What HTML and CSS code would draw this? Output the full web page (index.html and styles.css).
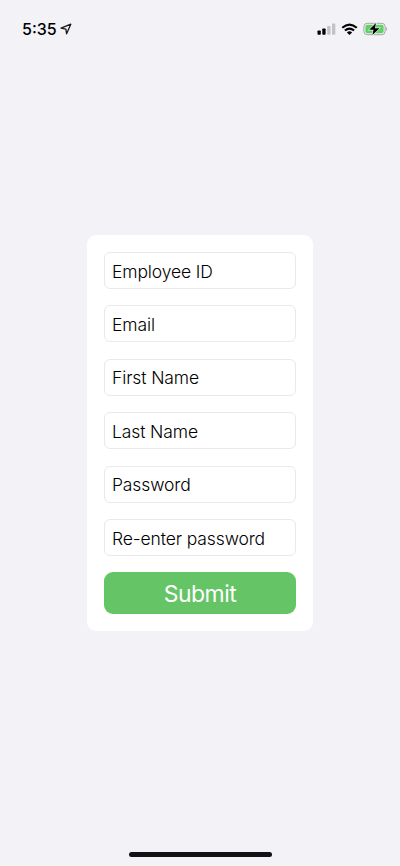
FILE: index.html
```html
<!DOCTYPE html>
<html lang="en">
<head>
<meta charset="utf-8">
<title>Register</title>
<link rel="stylesheet" href="styles.css">
</head>
<body>
<header class="status">
  <div class="clock"><span class="time">5:35</span>
    <svg class="arrow" width="12" height="12" viewBox="0 0 12 12"><path d="M1 5.200 10.800 1.200 6.600 10.800 5.900 6.100Z" fill="none" stroke="#1b1b1d" stroke-width="1.3" stroke-linejoin="round"/></svg>
  </div>
  <div class="indicators">
    <svg width="19" height="12" viewBox="0 0 19 12"><rect x=".5" y="7.500" width="3.300" height="4.200" rx=".8"/><rect x="5.300" y="5.500" width="3.300" height="6.200" rx=".8"/><rect x="10.200" y="3" width="3.300" height="8.700" rx=".8" fill="#c3c3c6"/><rect x="15" y=".5" width="3.300" height="11.200" rx=".8" fill="#c3c3c6"/></svg>
    <svg width="17" height="12" viewBox="0 0 17 12"><path d="M.5 4Q8.500-3 16.500 4L15 5.600Q8.500 0 2 5.600ZM3.200 6.800Q8.500 2.300 13.800 6.800L12.300 8.300Q8.500 5.200 4.700 8.300ZM5.900 9.400Q8.500 7.300 11.100 9.400L8.500 12Z"/></svg>
    <svg width="25" height="14" viewBox="0 0 25 14"><rect x=".9" y="1.300" width="21.200" height="11.400" rx="3.300" fill="none" stroke="#a5a5a8"/><rect x="2.400" y="2.800" width="18.200" height="8.400" rx="2" fill="#5fd063"/><path d="M23 5Q25 7 23 9Z" fill="#a5a5a8"/><path d="M13 1 6.200 7.800H10.500L9.400 13 16.600 6.200H12Z" stroke="#f2f2f7" stroke-width="1.200" paint-order="stroke"/></svg>
  </div>
</header>
<main class="screen">
  <form class="card">
    <div class="field"><span class="label">Employee ID</span></div>
    <div class="field"><span class="label">Email</span></div>
    <div class="field"><span class="label">First Name</span></div>
    <div class="field"><span class="label">Last Name</span></div>
    <div class="field"><span class="label">Password</span></div>
    <div class="field"><span class="label">Re-enter password</span></div>
    <button class="submit" type="button">Submit</button>
  </form>
</main>
<footer class="home"><div class="bar"></div></footer>
</body>
</html>
```

FILE: styles.css
```css
* { box-sizing: border-box; }
body { margin: 0; height: 866px; background: #f2f2f7; font-family: Inter, sans-serif; color: #000; display: flex; flex-direction: column; overflow: hidden; }
.status { height: 58px; padding: 0 12px 0 22px; display: flex; justify-content: space-between; align-items: center; }
.clock { display: flex; align-items: center; gap: 3px; }
.time { font-size: 16px; font-weight: 500; line-height: 20px; }
.indicators { display: flex; align-items: center; gap: 5px; }
.screen { flex: 1; display: flex; justify-content: center; align-items: flex-start; padding-top: 177px; }
.card { width: 226px; height: 396px; background: #fff; border-radius: 9px; padding: 17px; display: flex; flex-direction: column; justify-content: space-between; }
.field { height: 37px; border: 1px solid #e9e9eb; border-radius: 6px; padding: 2px 0 0 7px; display: flex; align-items: center; }
.label { font-size: 17.5px; font-weight: 350; line-height: 22px; letter-spacing: -.12px; white-space: nowrap; }
.submit { height: 41.5px; border: 0; border-radius: 9px; padding: 1px 0 0; background: #65c466; color: #fff; font: 400 23px/28px Inter, sans-serif; letter-spacing: -.55px; }
.home { height: 14px; display: flex; justify-content: center; }
.bar { width: 143px; height: 5px; border-radius: 3px; background: #121213; }
```
